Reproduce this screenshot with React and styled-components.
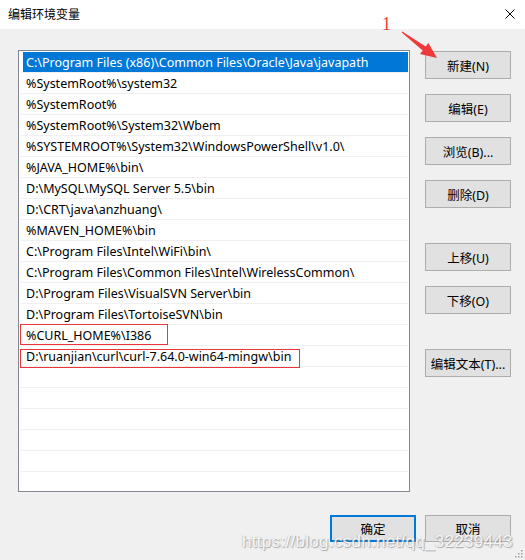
import React from "react";
import styled, { createGlobalStyle } from "styled-components";

const Global = createGlobalStyle`
  html, body { margin: 0; padding: 0; }
  body {
    background: #f0f0f0;
    font-family: "Noto Sans", "Noto Sans CJK SC", sans-serif;
    font-size: 12px;
    color: #000;
  }
`;

const Window = styled.div`
  position: relative;
  width: 525px;
  height: 560px;
  background: #f0f0f0;
  overflow: hidden;
  display: flex;
  flex-direction: column;
`;

const TitleBar = styled.div`
  height: 29px;
  background: #fff;
  display: flex;
  align-items: center;
  justify-content: space-between;
  padding: 0 10px 2px 8px;
  box-sizing: border-box;
  font-size: 12px;
`;

const Close = styled.svg`
  width: 10px;
  height: 10px;
`;

const Body = styled.div`
  display: flex;
  gap: 15px;
  padding: 21px 0 0 18px;
`;

const List = styled.div`
  width: 392px;
  height: 442px;
  box-sizing: border-box;
  border: 1px solid #828790;
  background: #fff;
  padding: 1px 1px 0 1px;
  overflow: hidden;
  font-size: 12.5px;
`;

const Row = styled.div`
  position: relative;
  height: 20px;
  border-bottom: 1px solid #f0f0f0;
  margin-left: 1px;
  display: flex;
`;

const Cell = styled.div`
  flex: 1;
  margin-left: 2px;
  padding-left: 3px;
  display: flex;
  align-items: center;
  white-space: nowrap;
  background: ${(p) => (p.$selected ? "#0078d7" : "transparent")};
  color: ${(p) => (p.$selected ? "#fff" : "#000")};
`;

const Mark = styled.span`
  position: absolute;
  left: -1px;
  top: ${(p) => p.$top}px;
  width: ${(p) => p.$w}px;
  height: ${(p) => p.$h}px;
  box-sizing: border-box;
  border: 1.5px solid #e8363a;
  pointer-events: none;
`;

const Side = styled.div`
  display: flex;
  flex-direction: column;
  gap: 15px;
  padding-top: 1px;
`;

const Spacer = styled.div`
  height: 5px;
`;

const Button = styled.button`
  width: 86px;
  height: ${(p) => p.$h || 28}px;
  box-sizing: border-box;
  background: #e1e1e1;
  border: ${(p) => (p.$default ? "2px solid #0078d7" : "1px solid #adadad")};
  font-family: inherit;
  font-size: 12.5px;
  color: #000;
  padding: 0;
  display: flex;
  align-items: center;
  justify-content: center;
`;

const Footer = styled.div`
  display: flex;
  justify-content: flex-end;
  gap: 9px;
  padding: 23px 14px 0 0;
`;

const Annotation = styled.svg`
  position: absolute;
  left: 0;
  top: 0;
  width: 525px;
  height: 80px;
  pointer-events: none;
`;

const Watermark = styled.div`
  position: absolute;
  left: 242px;
  top: 532px;
  font-family: "Liberation Sans", Arial, sans-serif;
  font-size: 17px;
  letter-spacing: 0.3px;
  color: rgba(255, 255, 255, 0.85);
  text-shadow: 1px 1px 1px rgba(120, 120, 120, 0.6), -1px 0 1px rgba(160,160,160,0.4);
  pointer-events: none;
  white-space: nowrap;
`;

const Grip = styled.svg`
  position: absolute;
  right: 2px;
  bottom: 2px;
  width: 10px;
  height: 10px;
`;

const items = [
  "C:\\Program Files (x86)\\Common Files\\Oracle\\Java\\javapath",
  "%SystemRoot%\\system32",
  "%SystemRoot%",
  "%SystemRoot%\\System32\\Wbem",
  "%SYSTEMROOT%\\System32\\WindowsPowerShell\\v1.0\\",
  "%JAVA_HOME%\\bin\\",
  "D:\\MySQL\\MySQL Server 5.5\\bin",
  "D:\\CRT\\java\\anzhuang\\",
  "%MAVEN_HOME%\\bin",
  "C:\\Program Files\\Intel\\WiFi\\bin\\",
  "C:\\Program Files\\Common Files\\Intel\\WirelessCommon\\",
  "D:\\Program Files\\VisualSVN Server\\bin",
  "D:\\Program Files\\TortoiseSVN\\bin",
  "%CURL_HOME%\\I386",
  "D:\\ruanjian\\curl\\curl-7.64.0-win64-mingw\\bin",
];

const marks = {
  13: { top: -1, w: 148, h: 21 },
  14: { top: 3, w: 280, h: 19 },
};

const rows = Array.from({ length: 21 }, (_, i) => items[i] || "");

export default function App() {
  return (
    <Window>
      <Global />
      <TitleBar>
        <span>编辑环境变量</span>
        <Close viewBox="0 0 10 10">
          <path d="M0.5 0.5 L9.5 9.5 M9.5 0.5 L0.5 9.5" stroke="#000" strokeWidth="1" fill="none" />
        </Close>
      </TitleBar>
      <Body>
        <List>
          {rows.map((t, i) => (
            <Row key={i}>
              <Cell $selected={i === 0}>{t}</Cell>
              {marks[i] && <Mark $top={marks[i].top} $w={marks[i].w} $h={marks[i].h} />}
            </Row>
          ))}
        </List>
        <Side>
          <Button>新建(N)</Button>
          <Button>编辑(E)</Button>
          <Button>浏览(B)...</Button>
          <Button>删除(D)</Button>
          <Spacer />
          <Button>上移(U)</Button>
          <Button>下移(O)</Button>
          <Spacer />
          <Button>编辑文本(T)...</Button>
        </Side>
      </Body>
      <Footer>
        <Button $h={27} $default>确定</Button>
        <Button $h={27}>取消</Button>
      </Footer>
      <Annotation viewBox="0 0 525 80">
        <text x="382" y="30" fill="#f03a3a" fontFamily="Liberation Serif, serif" fontSize="18">1</text>
        <polygon
          points="402.3,31.6 425.7,46.5 428.4,42.9 437,58 420,54.1 422.7,50.5 401.7,32.4"
          fill="#f03a3a"
        />
      </Annotation>
      <Watermark>https://blog.csdn.net/qq_32239443</Watermark>
      <Grip viewBox="0 0 10 10">
        {[[8, 2], [8, 5], [5, 5], [8, 8], [5, 8], [2, 8]].map(([x, y], k) => (
          <rect key={k} x={x} y={y} width="1.5" height="1.5" fill="#a0a0a0" />
        ))}
      </Grip>
    </Window>
  );
}
